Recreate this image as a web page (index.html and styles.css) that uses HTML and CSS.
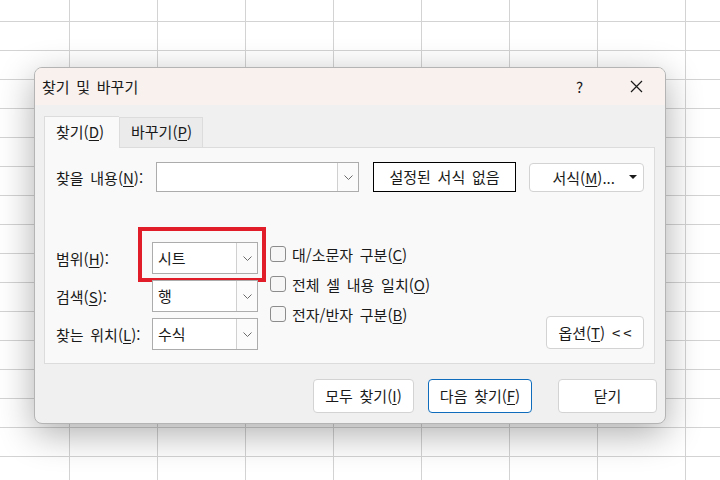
FILE: index.html
```html
<!DOCTYPE html>
<html lang="ko">
<head>
    <meta charset="UTF-8">
    <title>찾기 및 바꾸기</title>
    <link rel="stylesheet" href="styles.css">
</head>
<body>
    <div class="sheet"></div>

    <div class="dialog">
        <!-- Title bar -->
        <div class="titlebar">
            <span class="title">찾기 및 바꾸기</span>
            <span class="help">?</span>
            <span class="close">
                <svg width="13" height="13" viewBox="0 0 13 13"><path d="M1 1 L12 12 M12 1 L1 12" stroke="#1a1a1a" stroke-width="1.2" fill="none"/></svg>
            </span>
        </div>

        <div class="body">
            <!-- Tabs -->
            <div class="tabs">
                <div class="tab active">찾기(<u>D</u>)</div>
                <div class="tab">바꾸기(<u>P</u>)</div>
            </div>

            <div class="pane">
                <!-- Find what -->
                <div class="find-row">
                    <label class="find-label">찾을 내용(<u>N</u>):</label>
                    <div class="combo find-combo">
                        <span class="combo-text"></span>
                        <span class="combo-arrow"><svg width="9" height="5" viewBox="0 0 9 5"><path d="M0.5 0.5 L4.5 4.5 L8.5 0.5" stroke="#6b6b6b" fill="none"/></svg></span>
                    </div>
                    <div class="preview">설정된 서식 없음</div>
                    <div class="btn format-btn">
                        <span>서식(<u>M</u>)...</span>
                        <span class="tri"></span>
                    </div>
                </div>

                <!-- Options -->
                <div class="options">
                    <div class="opt-grid">
                        <label>범위(<u>H</u>):</label>
                        <div class="combo marked">
                            <span class="combo-text">시트</span>
                            <span class="combo-arrow"><svg width="9" height="5" viewBox="0 0 9 5"><path d="M0.5 0.5 L4.5 4.5 L8.5 0.5" stroke="#6b6b6b" fill="none"/></svg></span>
                        </div>
                        <label>검색(<u>S</u>):</label>
                        <div class="combo">
                            <span class="combo-text">행</span>
                            <span class="combo-arrow"><svg width="9" height="5" viewBox="0 0 9 5"><path d="M0.5 0.5 L4.5 4.5 L8.5 0.5" stroke="#6b6b6b" fill="none"/></svg></span>
                        </div>
                        <label>찾는 위치(<u>L</u>):</label>
                        <div class="combo">
                            <span class="combo-text">수식</span>
                            <span class="combo-arrow"><svg width="9" height="5" viewBox="0 0 9 5"><path d="M0.5 0.5 L4.5 4.5 L8.5 0.5" stroke="#6b6b6b" fill="none"/></svg></span>
                        </div>
                    </div>

                    <div class="checks">
                        <div class="check"><span class="box"></span>대/소문자 구분(<u>C</u>)</div>
                        <div class="check"><span class="box"></span>전체 셀 내용 일치(<u>O</u>)</div>
                        <div class="check"><span class="box"></span>전자/반자 구분(<u>B</u>)</div>
                    </div>

                    <div class="btn options-btn">옵션(<u>T</u>) <span class="arrows">&lt;&lt;</span></div>
                </div>
            </div>

            <!-- Footer buttons -->
            <div class="footer">
                <div class="btn foot-btn find-all">모두 찾기(<u>I</u>)</div>
                <div class="btn foot-btn find-next">다음 찾기(<u>F</u>)</div>
                <div class="btn foot-btn close-btn">닫기</div>
            </div>
        </div>
    </div>
</body>
</html>
```

FILE: styles.css
```css
/* Base */
* {
    margin: 0;
    padding: 0;
    box-sizing: border-box;
}
body {
    width: 720px;
    height: 480px;
    overflow: hidden;
    background: #fff;
    font-family: "Noto Sans CJK KR", "Noto Sans", sans-serif;
    font-size: 15px;
    word-spacing: 2.5px;
    color: #1a1a1a;
    position: relative;
}
u {
    text-decoration-thickness: 1px;
    text-underline-offset: 2px;
}

/* Spreadsheet grid behind the dialog */
.sheet {
    width: 720px;
    height: 480px;
    background-image:
        linear-gradient(to right, #d3d3d3 1px, transparent 1px),
        linear-gradient(to bottom, #d3d3d3 1px, transparent 1px);
    background-size: 88px 29px;
    background-position: 69px 21px;
}

/* Dialog window */
.dialog {
    position: absolute;
    left: 34px;
    top: 67px;
    width: 632px;
    height: 357px;
    border: 1px solid #b4b4b4;
    border-radius: 8px;
    overflow: hidden;
    background: #f0f0f0;
    box-shadow: 0 10px 36px rgba(0, 0, 0, 0.32);
}

.titlebar {
    height: 37px;
    background: #f8f1ee;
    display: flex;
    align-items: center;
    padding-left: 7px;
}
.title {
    font-size: 15px;
    line-height: 20px;
    flex: 1;
}
.help {
    font-size: 15px;
    line-height: 20px;
    width: 12px;
    margin-right: 42px;
}
.close {
    display: flex;
    margin-right: 22px;
}

.body {
    padding: 11px 10px 0 9px;
}

/* Tabs */
.tabs {
    display: flex;
    align-items: flex-end;
    height: 31px;
}
.tab {
    height: 30px;
    padding-left: 11px;
    line-height: 28px;
    border: 1px solid #dcdcdc;
    border-bottom: none;
    background: #ebebeb;
    width: 84px;
}
.tab.active {
    height: 32px;
    width: 75px;
    background: #f9f9f9;
    border-right: none;
    margin-bottom: -1px;
    position: relative;
    line-height: 30px;
}

.pane {
    height: 217px;
    border: 1px solid #dcdcdc;
    background: #f9f9f9;
    padding: 14px 10px 0 11px;
}

/* Find what row */
.find-row {
    display: flex;
    align-items: center;
    height: 30px;
}
.find-label {
    width: 100px;
}
.combo {
    display: flex;
    height: 32px;
    border: 1px solid #acacac;
    background: #fff;
    position: relative;
}
.find-combo {
    width: 203px;
    height: 30px;
}
.combo-text {
    flex: 1;
    padding-left: 5px;
    line-height: 29px;
}
.combo-arrow {
    width: 21px;
    border-left: 1px solid #d0d0d0;
    background: #fbfbfb;
    display: flex;
    align-items: center;
    justify-content: center;
}
.preview {
    width: 143px;
    height: 30px;
    margin-left: 14px;
    border: 1px solid #000;
    background: #fff;
    text-align: center;
    line-height: 28px;
}

/* Buttons */
.btn {
    background: #fff;
    border: 1px solid #d3d3d3;
    border-radius: 4px;
    text-align: center;
}
.format-btn {
    width: 115px;
    height: 29px;
    margin-left: 13px;
    display: flex;
    align-items: center;
    justify-content: flex-end;
    padding-right: 6px;
}
.format-btn .tri {
    width: 0;
    height: 0;
    margin-left: 14px;
    border-left: 4px solid transparent;
    border-right: 4px solid transparent;
    border-top: 4px solid #1a1a1a;
}

/* Options area */
.options {
    display: flex;
    margin-top: 50px;
}
.opt-grid {
    display: grid;
    grid-template-columns: 96px 106px;
    row-gap: 6px;
    align-items: center;
}
.marked::after {
    content: "";
    position: absolute;
    left: -15px;
    top: -16px;
    right: -9px;
    bottom: -9px;
    border: 4px solid #e11d2a;
}

.checks {
    margin-left: 12px;
    margin-top: -3px;
}
.check {
    display: flex;
    align-items: center;
    height: 30px;
}
.box {
    width: 16px;
    height: 16px;
    border: 1px solid #8c8c8c;
    border-radius: 3px;
    background: #f6f6f6;
    margin-right: 6px;
}

.options-btn {
    margin-left: auto;
    align-self: flex-end;
    margin-bottom: 1px;
    width: 98px;
    height: 33px;
    line-height: 31px;
}
.arrows {
    letter-spacing: 3px;
    margin-right: -3px;
}

/* Footer */
.footer {
    display: flex;
    justify-content: flex-end;
    margin-top: 15px;
    margin-right: -2px;
}
.foot-btn {
    height: 34px;
    line-height: 32px;
}
.find-all {
    width: 101px;
}
.find-next {
    width: 104px;
    margin-left: 14px;
    border-color: #0f6cbd;
}
.close-btn {
    width: 99px;
    margin-left: 26px;
}
```
